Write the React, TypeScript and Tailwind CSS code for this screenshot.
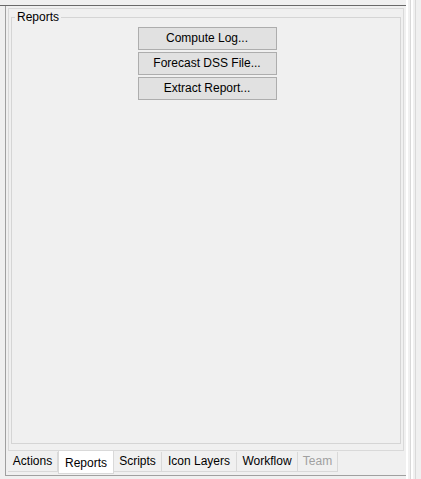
const tabs = [
  { label: "Actions", w: "w-[50px]" },
  { label: "Reports", w: "w-[56px]" },
  { label: "Scripts", w: "w-[48px]" },
  { label: "Icon Layers", w: "w-[75px]" },
  { label: "Workflow", w: "w-[61px]" },
  { label: "Team", w: "w-[40px]" },
];
const actions = ["Compute Log...", "Forecast DSS File...", "Extract Report..."];

export default function App() {
  return (
    <div className="flex h-[479px] w-[421px] bg-[#f0f0f0] font-['Liberation_Sans',Arial,sans-serif] text-[12px] text-black">
      <div className="flex w-[406px] flex-col pt-[5px] pb-[3px]">
        <div className="flex flex-1 flex-col border-t border-[#696969]">
          <div className="ml-[5px] flex flex-1 flex-col border-b border-l border-[#a0a0a0] pl-[2px] pt-[2px]">
            <div className="flex h-[443px] w-[396px] flex-col border border-[#d9d9d9] px-[2px] pt-[1px] pb-[6px]">
              <fieldset className="flex flex-1 flex-col border border-[#d5d5d5] p-0">
                <legend className="ml-[3px] px-[2px] leading-[14px]">Reports</legend>
                <div className="mt-[3px] flex flex-col items-center gap-[2px] pl-[2px]">
                  {actions.map((a) => (
                    <button
                      key={a}
                      className="h-[23px] w-[139px] border border-[#adadad] bg-[#e1e1e1] text-center leading-[21px]"
                    >
                      {a}
                    </button>
                  ))}
                </div>
              </fieldset>
            </div>
            <div className="flex h-[23px] items-start">
              {tabs.map((t) => {
                const selected = t.label === "Reports";
                const disabled = t.label === "Team";
                const base = `${t.w} text-center leading-[14px] `;
                return (
                  <div
                    key={t.label}
                    className={
                      base +
                      (selected
                        ? "h-[23px] border-x border-b border-[#d9d9d9] bg-white pt-[5px]"
                        : disabled
                          ? "mt-[1px] h-[20px] border-r border-b border-[#d9d9d9] pt-[2px] text-[#a0a0a0]"
                          : "mt-[1px] h-[20px] border-r border-b border-[#d9d9d9] pt-[2px]")
                    }
                  >
                    {t.label}
                  </div>
                );
              })}
            </div>
          </div>
        </div>
      </div>
      <div className="flex flex-1">
        <div className="w-[2px] bg-white" />
        <div className="w-[2px]" />
        <div className="w-px bg-[#d9d9d9]" />
        <div className="w-[2px] bg-white" />
        <div className="w-[2px]" />
        <div className="w-px bg-[#d9d9d9]" />
      </div>
    </div>
  );
}
